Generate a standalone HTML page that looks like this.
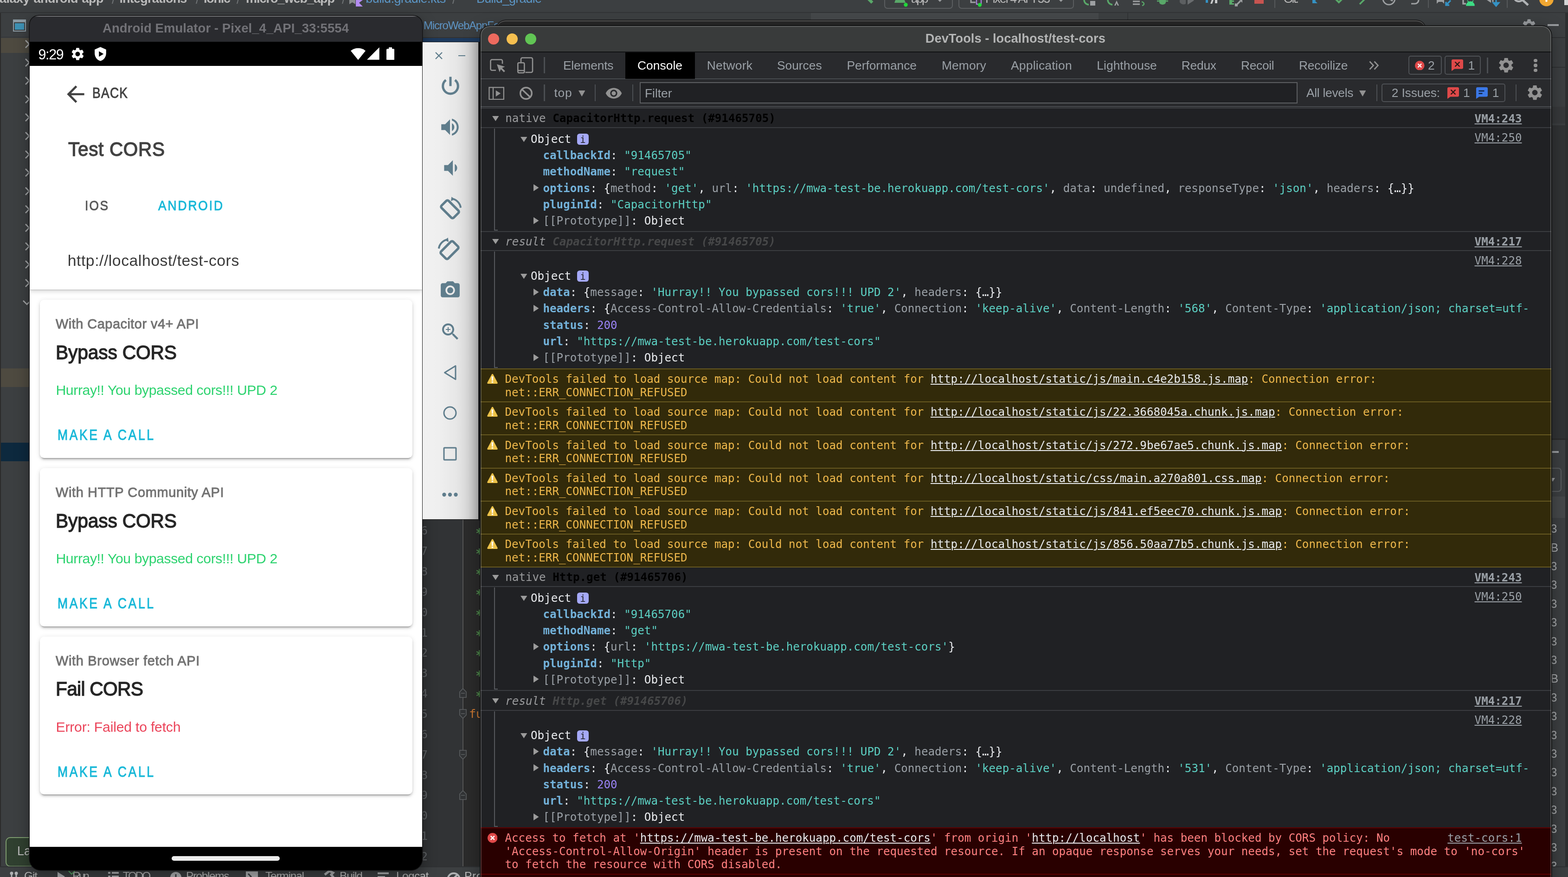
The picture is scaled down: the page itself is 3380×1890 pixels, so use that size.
<!DOCTYPE html>
<html lang="en"><head><meta charset="utf-8"><title>DevTools - localhost/test-cors</title>
<style>
html,body{margin:0;padding:0}
body{width:3380px;height:1890px;overflow:hidden;background:#3c3f41;position:relative;font-family:"Liberation Sans", sans-serif}
div,span,svg{position:absolute;display:block}
span{white-space:pre}
.L{left:0;top:0;width:0;height:0;will-change:transform}
.s{font-family:"Liberation Sans", sans-serif}
.m{font-family:"DejaVu Sans Mono", "Liberation Mono", monospace}
.u{text-decoration:underline;text-decoration-thickness:2px;text-underline-offset:1.700px}
.k{color:#73b2da;font-weight:700}
.st{color:#5cd0c3}
.g{color:#9aa0a6}
.n{color:#9a83f5}
.w{color:#e8eaed}
i,b{position:static;display:inline;font-style:inherit}
i{font-weight:inherit}
</style></head>
<body>
<div class="L">
<!-- IDE background -->
<div style="left:0.0px;top:0.0px;width:3380.0px;height:26.0px;background:#3c3f41;"></div>
<div style="left:0.0px;top:26.0px;width:3380.0px;height:2.0px;background:#323436;"></div>
<span id="t1" class="s" style="left:-17.0px;top:-20.4px;font-size:27px;line-height:35.1px;color:#bbbbbb;font-weight:700;letter-spacing:-0.502px;">galaxy-android-app</span>
<span id="t2" class="s" style="left:257.4px;top:-20.4px;font-size:27px;line-height:35.1px;color:#bbbbbb;font-weight:700;letter-spacing:-0.775px;">integrations</span>
<span id="t3" class="s" style="left:439.0px;top:-20.4px;font-size:27px;line-height:35.1px;color:#bbbbbb;font-weight:700;letter-spacing:-1.254px;">ionic</span>
<span id="t4" class="s" style="left:530.0px;top:-20.4px;font-size:27px;line-height:35.1px;color:#bbbbbb;font-weight:700;letter-spacing:-1.006px;">micro_web_app</span>
<span id="t5" class="s" style="left:241.0px;top:-17.9px;font-size:27px;line-height:35.1px;color:#6f7375;">/</span>
<span id="t6" class="s" style="left:422.0px;top:-17.9px;font-size:27px;line-height:35.1px;color:#6f7375;">/</span>
<span id="t7" class="s" style="left:510.0px;top:-17.9px;font-size:27px;line-height:35.1px;color:#6f7375;">/</span>
<span id="t8" class="s" style="left:737.0px;top:-17.9px;font-size:27px;line-height:35.1px;color:#6f7375;">/</span>
<span id="t9" class="s" style="left:975.0px;top:-17.9px;font-size:27px;line-height:35.1px;color:#6f7375;">/</span>
<span id="t10" class="s" style="left:788.3px;top:-20.4px;font-size:27px;line-height:35.1px;color:#5b95c4;letter-spacing:-0.574px;">build.gradle.kts</span>
<span id="t11" class="s" style="left:1027.0px;top:-20.4px;font-size:27px;line-height:35.1px;color:#5b95c4;letter-spacing:-0.829px;">Build_gradle</span>
<svg style="left:752.0px;top:0.0px;" width="32.0" height="14.0" viewBox="0 0 32 14"><path d="M1 0h13v9l-6.500-4-6.500 4z" fill="#8a8d8f"/><path d="M15 0h15l-8 6 8 8h-15z" fill="#b48cf2"/></svg>
<div style="left:1906.0px;top:-20.0px;width:148.0px;height:39.3px;background:transparent;border:2px solid #5a5d5f;border-radius:7px;box-sizing:border-box"></div>
<div style="left:2066.0px;top:-20.0px;width:249.0px;height:39.3px;background:transparent;border:2px solid #5a5d5f;border-radius:7px;box-sizing:border-box"></div>
<span id="t12" class="s" style="left:1964.0px;top:-19.4px;font-size:26px;line-height:33.8px;color:#bbbbbb;letter-spacing:-2.947px;">app</span>
<span id="t13" class="s" style="left:2124.0px;top:-19.4px;font-size:26px;line-height:33.8px;color:#bbbbbb;letter-spacing:-1.684px;">Pixel 4 API 33</span>
<svg style="left:1862.0px;top:0.0px;" width="24.0" height="14.0" viewBox="0 0 24 14"><path d="M2 -6l14 14 4.500-4.500-10-10z" fill="#59a869"/></svg>
<svg style="left:1926.0px;top:0.0px;" width="34.0" height="16.0" viewBox="0 0 34 16"><path d="M2 6l3-8h18l3 8z" fill="#59a869"/><circle cx="26.500" cy="10.300" r="4.200" fill="#21d739"/></svg>
<svg style="left:2018.0px;top:0.0px;" width="16.0" height="6.0" viewBox="0 0 16 6"><path d="M2 -2h12l-6 6z" fill="#9da0a2"/></svg>
<svg style="left:2279.0px;top:0.0px;" width="16.0" height="6.0" viewBox="0 0 16 6"><path d="M2 -2h12l-6 6z" fill="#9da0a2"/></svg>
<svg style="left:2090.0px;top:0.0px;" width="34.0" height="16.0" viewBox="0 0 34 16"><path d="M3 -4v9h10" fill="none" stroke="#9da0a2" stroke-width="3"/><rect x="15" y="-2" width="10" height="11" fill="none" stroke="#a77fd8" stroke-width="2.400"/><circle cx="22" cy="10.500" r="4.200" fill="#21d739"/></svg>
<svg style="left:2335.0px;top:0.0px;" width="30.0" height="14.0" viewBox="0 0 30 14"><path d="M12 -10a10 10 0 0 0 0 20" fill="none" stroke="#59a869" stroke-width="3.400"/><rect x="15" y="2" width="11" height="10" fill="#9da0a2"/></svg>
<svg style="left:2386.0px;top:0.0px;" width="30.0" height="14.0" viewBox="0 0 30 14"><path d="M12 -10a10 10 0 0 0 0 20" fill="none" stroke="#59a869" stroke-width="3.400"/><path d="M16 12l5-11 5 11h-3l-2-5-2 5z" fill="#9da0a2"/></svg>
<svg style="left:2440.0px;top:0.0px;" width="32.0" height="14.0" viewBox="0 0 32 14"><path d="M2 3h15M2 9h15" stroke="#9da0a2" stroke-width="3.200"/><path d="M21 4a5 5 0 0 1 5 5 5 5 0 0 1-4 3" fill="none" stroke="#59a869" stroke-width="2.400"/></svg>
<svg style="left:2492.0px;top:0.0px;" width="28.0" height="12.0" viewBox="0 0 28 12"><path d="M2 1h24v2.500h-24zM7 -4h14v9a7 5 0 0 1-14 0z" fill="#59a869"/></svg>
<svg style="left:2543.0px;top:0.0px;" width="34.0" height="14.0" viewBox="0 0 34 14"><path d="M3 -6a8 8 0 0 0 10 14v-14z" fill="#5c5f61"/><path d="M17 -8l14 9-14 9z" fill="#6a6d6f"/></svg>
<svg style="left:2598.0px;top:0.0px;" width="30.0" height="12.0" viewBox="0 0 30 12"><rect x="1" y="-2" width="5" height="8" fill="#3592c4"/><path d="M11 8l5-14h4l-5 14zM21 -2h5v9h-5z" fill="#c9cbcc"/></svg>
<svg style="left:2648.0px;top:0.0px;" width="34.0" height="14.0" viewBox="0 0 34 14"><path d="M2 -2h6v3h4v3h-4v3h4v3h-10z" fill="#59a869"/><path d="M16 12l10-10M20 12h-4.500v-4.500" fill="none" stroke="#9da0a2" stroke-width="3.400"/><path d="M22 -2l8 0 0 8z" fill="#9da0a2"/></svg>
<div style="left:2704.0px;top:0.0px;width:20.0px;height:7.6px;background:#c75450;"></div>
<div style="left:2746.5px;top:0.0px;width:2.0px;height:17.0px;background:#55585a;"></div>
<span id="t14" class="s" style="left:2766.7px;top:-19.4px;font-size:26px;line-height:33.8px;color:#bbbbbb;letter-spacing:-2.385px;">Git:</span>
<svg style="left:2826.0px;top:0.0px;" width="20.0" height="10.0" viewBox="0 0 20 10"><path d="M3 -4v11h11l-5-5 5-6z" fill="#3592c4"/></svg>
<svg style="left:2874.0px;top:0.0px;" width="24.0" height="10.0" viewBox="0 0 24 10"><path d="M3 -4l9 9 9-9" fill="none" stroke="#59a869" stroke-width="4"/></svg>
<svg style="left:2928.0px;top:0.0px;" width="26.0" height="12.0" viewBox="0 0 26 12"><path d="M3 9l14-14" stroke="#59a869" stroke-width="3.600"/></svg>
<svg style="left:2976.0px;top:0.0px;" width="36.0" height="14.0" viewBox="0 0 36 14"><circle cx="18" cy="-3" r="13" fill="none" stroke="#9da0a2" stroke-width="3"/><path d="M18 -3l8 5" stroke="#9da0a2" stroke-width="3"/></svg>
<svg style="left:3038.0px;top:0.0px;" width="26.0" height="12.0" viewBox="0 0 26 12"><path d="M4 8h8a8 8 0 0 0 8-8v-3" fill="none" stroke="#9da0a2" stroke-width="3.200"/></svg>
<div style="left:3078.4px;top:0.0px;width:2.0px;height:17.0px;background:#55585a;"></div>
<svg style="left:3095.0px;top:0.0px;" width="36.0" height="16.0" viewBox="0 0 36 16"><path d="M2 8v-12h16v12l-4-4h-8z" fill="#9da0a2"/><path d="M32 1l-9 9M22 4v7h7" fill="none" stroke="#3592c4" stroke-width="3.400"/></svg>
<svg style="left:3152.0px;top:0.0px;" width="30.0" height="16.0" viewBox="0 0 30 16"><path d="M2 -2v10h6" fill="none" stroke="#9da0a2" stroke-width="3.400"/><path d="M9 12a8.500 8.500 0 0 1 17 0zM11 1l3 4M24 1l-3 4" fill="#3ddc84" stroke="#3ddc84" stroke-width="1.600"/></svg>
<svg style="left:3199.0px;top:0.0px;" width="36.0" height="16.0" viewBox="0 0 36 16"><path d="M3 -2l12 8v-12z" fill="#9da0a2"/><path d="M19 -4v8" stroke="#9da0a2" stroke-width="3"/><path d="M26 -2v9M20 6l6 7 6-7z" fill="#3592c4" stroke="#3592c4" stroke-width="3"/></svg>
<div style="left:3248.4px;top:0.0px;width:2.0px;height:17.0px;background:#55585a;"></div>
<svg style="left:3262.0px;top:0.0px;" width="40.0" height="14.0" viewBox="0 0 40 14"><circle cx="12" cy="-8" r="11" fill="none" stroke="#b0b3b5" stroke-width="4"/><path d="M20 0l12 11" stroke="#b0b3b5" stroke-width="5"/></svg>
<svg style="left:3316.0px;top:0.0px;" width="36.0" height="16.0" viewBox="0 0 36 16"><circle cx="17.500" cy="-1.700" r="15.300" fill="#f0a732"/><rect x="15.500" y="-8" width="4" height="12" rx="1" fill="#fff"/></svg>
<div style="left:3372.0px;top:0.0px;width:8.0px;height:11.0px;background:#d4d5d6;"></div>
<div style="left:0.0px;top:28.0px;width:64.0px;height:1840.0px;background:#3c3f41;"></div>
<div style="left:0.0px;top:28.0px;width:2.0px;height:1840.0px;background:#2b2b2b;"></div>
<div style="left:2.0px;top:79.0px;width:64.0px;height:2.0px;background:#36393b;"></div>
<div style="left:2.0px;top:82.0px;width:64.0px;height:32.0px;background:#4e4a40;"></div>
<div style="left:2.0px;top:794.0px;width:64.0px;height:40.0px;background:#4e4a40;"></div>
<div style="left:2.0px;top:954.0px;width:64.0px;height:40.0px;background:#0d293e;"></div>
<div style="left:28.0px;top:42.0px;width:28.0px;height:26.0px;background:#8b9aa3;"></div>
<div style="left:30.0px;top:48.0px;width:24.0px;height:18.0px;background:#3c3f41;"></div>
<div style="left:32.0px;top:50.0px;width:20.0px;height:14.0px;background:#3e91b4;"></div>
<svg style="left:50.0px;top:85.0px;" width="14.0" height="20.0" viewBox="0 0 14 20"><path d="M5 2l8 8-8 8" fill="none" stroke="#a4a6a8" stroke-width="2.6"/></svg>
<svg style="left:50.0px;top:124.6px;" width="14.0" height="20.0" viewBox="0 0 14 20"><path d="M5 2l8 8-8 8" fill="none" stroke="#a4a6a8" stroke-width="2.6"/></svg>
<svg style="left:50.0px;top:164.2px;" width="14.0" height="20.0" viewBox="0 0 14 20"><path d="M5 2l8 8-8 8" fill="none" stroke="#a4a6a8" stroke-width="2.6"/></svg>
<svg style="left:50.0px;top:203.8px;" width="14.0" height="20.0" viewBox="0 0 14 20"><path d="M5 2l8 8-8 8" fill="none" stroke="#a4a6a8" stroke-width="2.6"/></svg>
<svg style="left:50.0px;top:243.4px;" width="14.0" height="20.0" viewBox="0 0 14 20"><path d="M5 2l8 8-8 8" fill="none" stroke="#a4a6a8" stroke-width="2.6"/></svg>
<svg style="left:50.0px;top:283.0px;" width="14.0" height="20.0" viewBox="0 0 14 20"><path d="M5 2l8 8-8 8" fill="none" stroke="#a4a6a8" stroke-width="2.6"/></svg>
<svg style="left:50.0px;top:322.6px;" width="14.0" height="20.0" viewBox="0 0 14 20"><path d="M5 2l8 8-8 8" fill="none" stroke="#a4a6a8" stroke-width="2.6"/></svg>
<svg style="left:50.0px;top:362.2px;" width="14.0" height="20.0" viewBox="0 0 14 20"><path d="M5 2l8 8-8 8" fill="none" stroke="#a4a6a8" stroke-width="2.6"/></svg>
<svg style="left:50.0px;top:401.8px;" width="14.0" height="20.0" viewBox="0 0 14 20"><path d="M5 2l8 8-8 8" fill="none" stroke="#a4a6a8" stroke-width="2.6"/></svg>
<svg style="left:50.0px;top:441.4px;" width="14.0" height="20.0" viewBox="0 0 14 20"><path d="M5 2l8 8-8 8" fill="none" stroke="#a4a6a8" stroke-width="2.6"/></svg>
<svg style="left:50.0px;top:481.0px;" width="14.0" height="20.0" viewBox="0 0 14 20"><path d="M5 2l8 8-8 8" fill="none" stroke="#a4a6a8" stroke-width="2.6"/></svg>
<svg style="left:50.0px;top:520.6px;" width="14.0" height="20.0" viewBox="0 0 14 20"><path d="M5 2l8 8-8 8" fill="none" stroke="#a4a6a8" stroke-width="2.6"/></svg>
<svg style="left:50.0px;top:560.2px;" width="14.0" height="20.0" viewBox="0 0 14 20"><path d="M5 2l8 8-8 8" fill="none" stroke="#a4a6a8" stroke-width="2.6"/></svg>
<svg style="left:50.0px;top:599.8px;" width="14.0" height="20.0" viewBox="0 0 14 20"><path d="M5 2l8 8-8 8" fill="none" stroke="#a4a6a8" stroke-width="2.6"/></svg>
<svg style="left:48.0px;top:645.0px;" width="16.0" height="14.0" viewBox="0 0 16 14"><path d="M2 3l8 8 8-8" fill="none" stroke="#a4a6a8" stroke-width="2.6"/></svg>
<div style="left:11.6px;top:1804.0px;width:80.0px;height:63.5px;background:#304030;border:2px solid #7c9a6e;border-radius:10px;box-sizing:border-box"></div>
<span id="t15" class="s" style="left:37.0px;top:1817.1px;font-size:27px;line-height:35.1px;color:#bbbbbb;">La</span>
<div style="left:905.0px;top:28.0px;width:140.0px;height:54.0px;background:#3c3f41;"></div>
<span id="t16" class="s" style="left:913.0px;top:39.1px;font-size:24px;line-height:31.2px;color:#5e95c5;letter-spacing:-1.191px;">MicroWebAppFe</span>
<div style="left:905.0px;top:80.0px;width:140.0px;height:2.0px;background:#323232;"></div>
<div style="left:905.0px;top:82.0px;width:140.0px;height:8.0px;background:#1d3a5e;"></div>
<div style="left:905.0px;top:90.0px;width:140.0px;height:1780.0px;background:#2b2b2b;"></div>
<div style="left:905.0px;top:90.0px;width:93.0px;height:1780.0px;background:#313335;"></div>
<div style="left:997.0px;top:90.0px;width:2.0px;height:1780.0px;background:#555555;"></div>
<span id="t17" class="m" style="left:907.0px;top:1128.3px;font-size:25px;line-height:32.5px;color:#606366;">6</span>
<span id="t18" class="m" style="left:1025.0px;top:1132.3px;font-size:28px;line-height:36.4px;color:#4f8a4c;font-weight:700;">*</span>
<span id="t19" class="m" style="left:907.0px;top:1172.1px;font-size:25px;line-height:32.5px;color:#606366;">7</span>
<span id="t20" class="m" style="left:1025.0px;top:1176.2px;font-size:28px;line-height:36.4px;color:#4f8a4c;font-weight:700;">*</span>
<span id="t21" class="m" style="left:907.0px;top:1216.0px;font-size:25px;line-height:32.5px;color:#606366;">8</span>
<span id="t22" class="m" style="left:1025.0px;top:1220.0px;font-size:28px;line-height:36.4px;color:#4f8a4c;font-weight:700;">*</span>
<span id="t23" class="m" style="left:907.0px;top:1259.8px;font-size:25px;line-height:32.5px;color:#606366;">9</span>
<span id="t24" class="m" style="left:1025.0px;top:1263.9px;font-size:28px;line-height:36.4px;color:#4f8a4c;font-weight:700;">*</span>
<span id="t25" class="m" style="left:907.0px;top:1303.7px;font-size:25px;line-height:32.5px;color:#606366;">0</span>
<span id="t26" class="m" style="left:1025.0px;top:1307.7px;font-size:28px;line-height:36.4px;color:#4f8a4c;font-weight:700;">*</span>
<span id="t27" class="m" style="left:907.0px;top:1347.5px;font-size:25px;line-height:32.5px;color:#606366;">1</span>
<span id="t28" class="m" style="left:1025.0px;top:1351.6px;font-size:28px;line-height:36.4px;color:#4f8a4c;font-weight:700;">*</span>
<span id="t29" class="m" style="left:907.0px;top:1391.4px;font-size:25px;line-height:32.5px;color:#606366;">2</span>
<span id="t30" class="m" style="left:1025.0px;top:1395.4px;font-size:28px;line-height:36.4px;color:#4f8a4c;font-weight:700;">*</span>
<span id="t31" class="m" style="left:907.0px;top:1435.2px;font-size:25px;line-height:32.5px;color:#606366;">3</span>
<span id="t32" class="m" style="left:1025.0px;top:1439.3px;font-size:28px;line-height:36.4px;color:#4f8a4c;font-weight:700;">*</span>
<span id="t33" class="m" style="left:907.0px;top:1479.1px;font-size:25px;line-height:32.5px;color:#606366;">4</span>
<span id="t34" class="m" style="left:1025.0px;top:1483.1px;font-size:28px;line-height:36.4px;color:#4f8a4c;font-weight:700;">*</span>
<span id="t35" class="m" style="left:907.0px;top:1523.0px;font-size:25px;line-height:32.5px;color:#606366;">5</span>
<span id="t36" class="m" style="left:907.0px;top:1566.8px;font-size:25px;line-height:32.5px;color:#606366;">6</span>
<span id="t37" class="m" style="left:907.0px;top:1610.6px;font-size:25px;line-height:32.5px;color:#606366;">7</span>
<span id="t38" class="m" style="left:907.0px;top:1654.5px;font-size:25px;line-height:32.5px;color:#606366;">8</span>
<span id="t39" class="m" style="left:907.0px;top:1698.4px;font-size:25px;line-height:32.5px;color:#606366;">9</span>
<span id="t40" class="m" style="left:907.0px;top:1742.2px;font-size:25px;line-height:32.5px;color:#606366;">0</span>
<span id="t41" class="m" style="left:907.0px;top:1786.0px;font-size:25px;line-height:32.5px;color:#606366;">1</span>
<span id="t42" class="m" style="left:907.0px;top:1829.9px;font-size:25px;line-height:32.5px;color:#606366;">2</span>
<span id="t43" class="m" style="left:1011.0px;top:1523.3px;font-size:25px;line-height:32.5px;color:#cc7832;">fu</span>
<svg style="left:989.0px;top:1483.0px;" width="18.0" height="22.0" viewBox="0 0 18 22"><path d="M2 8l7-7 7 7v12h-14z" fill="#313335" stroke="#5c5f61" stroke-width="1.6"/><path d="M5 11h8" stroke="#5c5f61" stroke-width="1.6"/></svg>
<svg style="left:989.0px;top:1527.0px;" width="18.0" height="22.0" viewBox="0 0 18 22"><path d="M2 2h14v12l-7 7-7-7z" fill="#313335" stroke="#5c5f61" stroke-width="1.6"/><path d="M5 11h8" stroke="#5c5f61" stroke-width="1.6"/></svg>
<svg style="left:989.0px;top:1615.0px;" width="18.0" height="22.0" viewBox="0 0 18 22"><path d="M2 2h14v12l-7 7-7-7z" fill="#313335" stroke="#5c5f61" stroke-width="1.6"/><path d="M5 11h8" stroke="#5c5f61" stroke-width="1.6"/></svg>
<svg style="left:989.0px;top:1703.0px;" width="18.0" height="22.0" viewBox="0 0 18 22"><path d="M2 8l7-7 7 7v12h-14z" fill="#313335" stroke="#5c5f61" stroke-width="1.6"/><path d="M5 11h8" stroke="#5c5f61" stroke-width="1.6"/></svg>
<div style="left:3344.0px;top:28.0px;width:36.0px;height:1840.0px;background:#3c3f41;"></div>
<div style="left:3344.0px;top:80.0px;width:30.0px;height:2.0px;background:#2f3133;"></div>
<div style="left:1748.0px;top:28.0px;width:620.0px;height:15.0px;background:#45484a;"></div>
<div style="left:2430.0px;top:28.0px;width:2.0px;height:16.0px;background:#323436;"></div>
<div style="left:3344.0px;top:144.0px;width:30.0px;height:2.0px;background:#2f3133;"></div>
<div style="left:3344.0px;top:230.0px;width:30.0px;height:36.0px;background:#37393b;"></div>
<div style="left:3373.5px;top:28.0px;width:6.5px;height:1840.0px;background:#2d2f30;"></div>
<div style="left:3344.0px;top:270.0px;width:30.0px;height:675.0px;background:#313335;"></div>
<div style="left:3344.0px;top:945.0px;width:36.0px;height:3.0px;background:#2b2b2b;"></div>
<div style="left:3344.0px;top:972.0px;width:16.0px;height:4.0px;background:#9a9da0;"></div>
<div style="left:3344.0px;top:1008.0px;width:22.0px;height:52.0px;background:#3c3f41;border:2px solid #5a5d5f;border-left:none;border-radius:0 7px 7px 0;box-sizing:border-box"></div>
<svg style="left:3344.0px;top:1030.0px;" width="8.0" height="10.0" viewBox="0 0 8 10"><path d="M-2 0h10l-5 8z" fill="#9a9da0"/></svg>
<div style="left:3344.0px;top:1070.0px;width:30.0px;height:46.0px;background:#45484a;"></div>
<span id="t44" class="s" style="left:3342.5px;top:1123.1px;font-size:25px;line-height:32.5px;color:#a9abad;">3</span>
<span id="t45" class="s" style="left:3342.5px;top:1163.5px;font-size:25px;line-height:32.5px;color:#a9abad;">B</span>
<span id="t46" class="s" style="left:3342.5px;top:1203.9px;font-size:25px;line-height:32.5px;color:#a9abad;">3</span>
<span id="t47" class="s" style="left:3342.5px;top:1244.3px;font-size:25px;line-height:32.5px;color:#a9abad;">3</span>
<span id="t48" class="s" style="left:3342.5px;top:1284.7px;font-size:25px;line-height:32.5px;color:#a9abad;">3</span>
<span id="t49" class="s" style="left:3342.5px;top:1325.1px;font-size:25px;line-height:32.5px;color:#a9abad;">3</span>
<span id="t50" class="s" style="left:3342.5px;top:1365.5px;font-size:25px;line-height:32.5px;color:#a9abad;">3</span>
<span id="t51" class="s" style="left:3342.5px;top:1405.9px;font-size:25px;line-height:32.5px;color:#a9abad;">3</span>
<span id="t52" class="s" style="left:3342.5px;top:1446.3px;font-size:25px;line-height:32.5px;color:#a9abad;">B</span>
<span id="t53" class="s" style="left:3342.5px;top:1486.7px;font-size:25px;line-height:32.5px;color:#a9abad;">3</span>
<span id="t54" class="s" style="left:3342.5px;top:1527.1px;font-size:25px;line-height:32.5px;color:#a9abad;">3</span>
<span id="t55" class="s" style="left:3342.5px;top:1567.5px;font-size:25px;line-height:32.5px;color:#a9abad;">3</span>
<span id="t56" class="s" style="left:3342.5px;top:1607.9px;font-size:25px;line-height:32.5px;color:#a9abad;">3</span>
<span id="t57" class="s" style="left:3342.5px;top:1648.3px;font-size:25px;line-height:32.5px;color:#a9abad;">3</span>
<span id="t58" class="s" style="left:3342.5px;top:1688.7px;font-size:25px;line-height:32.5px;color:#a9abad;">3</span>
<span id="t59" class="s" style="left:3342.5px;top:1729.1px;font-size:25px;line-height:32.5px;color:#a9abad;">3</span>
<span id="t60" class="s" style="left:3342.5px;top:1769.5px;font-size:25px;line-height:32.5px;color:#a9abad;">3</span>
<span id="t61" class="s" style="left:3342.5px;top:1809.9px;font-size:25px;line-height:32.5px;color:#a9abad;">3</span>
<span id="t62" class="s" style="left:3342.5px;top:1850.3px;font-size:25px;line-height:32.5px;color:#a9abad;">3</span>
<svg style="left:3279.0px;top:38.0px;" width="34.0" height="34.0" viewBox="0 0 24 24"><path fill="#9a9da0" d="M19.140 12.940c.040-.300.060-.610.060-.940 0-.320-.020-.640-.070-.940l2.030-1.580c.180-.140.230-.410.120-.610l-1.920-3.320c-.120-.220-.370-.290-.590-.220l-2.390.960c-.500-.380-1.030-.700-1.620-.940l-.360-2.540c-.040-.240-.240-.410-.480-.410h-3.840c-.240 0-.430.170-.470.410l-.360 2.540c-.590.240-1.130.570-1.620.940l-2.390-.960c-.220-.080-.470 0-.590.220L2.740 8.870c-.120.210-.080.470.120.610l2.030 1.580c-.050.300-.090.630-.090.940s.020.640.070.940l-2.030 1.580c-.180.140-.230.410-.120.610l1.920 3.320c.120.220.370.290.590.220l2.390-.960c.500.380 1.030.700 1.620.940l.360 2.540c.050.240.240.410.480.410h3.840c.240 0 .440-.170.470-.410l.360-2.540c.590-.240 1.130-.560 1.620-.940l2.390.960c.220.080.470 0 .590-.220l1.920-3.320c.120-.220.070-.470-.120-.610l-2.010-1.580zM12 15.600c-1.980 0-3.600-1.620-3.600-3.600s1.620-3.600 3.600-3.600 3.600 1.620 3.600 3.600-1.620 3.600-3.600 3.600z"/></svg>
<div style="left:3336.0px;top:52.0px;width:24.0px;height:4.0px;background:#9a9da0;"></div>
<div style="left:0.0px;top:1868.0px;width:3380.0px;height:24.0px;background:#3c3f41;"></div>
<div style="left:0.0px;top:1866.5px;width:3380.0px;height:2.0px;background:#2f3133;"></div>
<span id="t63" class="s" style="left:52.0px;top:1871.6px;font-size:24.5px;line-height:31.85px;color:#bbbbbb;letter-spacing:-1.155px;">Git</span>
<span id="t64" class="s" style="left:156.0px;top:1871.6px;font-size:24.5px;line-height:31.85px;color:#bbbbbb;letter-spacing:-3.976px;">Run</span>
<span id="t65" class="s" style="left:264.7px;top:1871.6px;font-size:24.5px;line-height:31.85px;color:#bbbbbb;letter-spacing:-3.213px;">TODO</span>
<span id="t66" class="s" style="left:401.0px;top:1871.6px;font-size:24.5px;line-height:31.85px;color:#bbbbbb;letter-spacing:-1.441px;">Problems</span>
<span id="t67" class="s" style="left:572.0px;top:1871.6px;font-size:24.5px;line-height:31.85px;color:#bbbbbb;letter-spacing:-1.228px;">Terminal</span>
<span id="t68" class="s" style="left:732.0px;top:1871.6px;font-size:24.5px;line-height:31.85px;color:#bbbbbb;letter-spacing:-1.121px;">Build</span>
<span id="t69" class="s" style="left:854.0px;top:1871.6px;font-size:24.5px;line-height:31.85px;color:#bbbbbb;letter-spacing:-0.634px;">Logcat</span>
<span id="t70" class="s" style="left:1001.0px;top:1871.6px;font-size:24.5px;line-height:31.85px;color:#bbbbbb;letter-spacing:0.628px;">Profiler</span>
<svg style="left:20.0px;top:1877.0px;" width="22.0" height="16.0" viewBox="0 0 22 16"><circle cx="5" cy="5" r="3.5" fill="#afb1b3"/><circle cx="15" cy="5" r="3.5" fill="#afb1b3"/><path d="M5 6v10M15 6v10" stroke="#afb1b3" stroke-width="3"/></svg>
<svg style="left:121.0px;top:1875.0px;" width="42.0" height="18.0" viewBox="0 0 42 18"><path d="M3 4l16 10-16 10z" fill="#afb1b3"/><path d="M27 2l6.500 7 6.500-7" fill="none" stroke="#59a869" stroke-width="2.200"/></svg>
<svg style="left:233.0px;top:1878.0px;" width="24.0" height="16.0" viewBox="0 0 24 16"><path d="M0 3h5M8 3h15M0 11h5M8 11h15" stroke="#afb1b3" stroke-width="4"/></svg>
<svg style="left:366.0px;top:1877.0px;" width="26.0" height="16.0" viewBox="0 0 26 16"><circle cx="13" cy="14" r="12" fill="#afb1b3"/><rect x="11.5" y="7" width="3" height="9" fill="#3c3f41"/></svg>
<svg style="left:530.0px;top:1877.0px;" width="28.0" height="16.0" viewBox="0 0 28 16"><rect x="0" y="1" width="26" height="22" fill="#afb1b3"/><path d="M5 6l6 6-6 6" fill="none" stroke="#3c3f41" stroke-width="3"/></svg>
<svg style="left:696.0px;top:1875.0px;" width="28.0" height="18.0" viewBox="0 0 28 18"><path d="M4 10l10-8 8 4-4 4 8 10" fill="none" stroke="#afb1b3" stroke-width="5"/></svg>
<svg style="left:814.0px;top:1879.0px;" width="28.0" height="14.0" viewBox="0 0 28 14"><path d="M0 3h24M0 11h16" stroke="#afb1b3" stroke-width="4"/></svg>
<svg style="left:962.0px;top:1877.0px;" width="32.0" height="16.0" viewBox="0 0 32 16"><path d="M3 18a13 13 0 0 1 26 0" fill="none" stroke="#afb1b3" stroke-width="4"/><path d="M16 16l8-8" stroke="#afb1b3" stroke-width="4"/></svg>
</div>
<div class="L">
<!-- emulator window -->
<div style="left:63.9px;top:33.5px;width:846.1px;height:1841.5px;border-radius:19px 19px 24px 24px;background:#000;overflow:hidden;box-shadow:0 0 0 1.5px #131314,0 12px 30px 2px rgba(0,0,0,.35)">
<div style="left:0.0px;top:0.0px;width:846.1px;height:56.5px;background:#2a2b2f;"></div>
<div style="left:0.0px;top:0.0px;width:846.1px;height:2.0px;background:linear-gradient(90deg,rgba(255,255,255,0) 0,rgba(255,255,255,.32) 2.500%,rgba(255,255,255,.32) 97.500%,rgba(255,255,255,0) 100%);"></div>
<div style="left:0.0px;top:108.0px;width:846.1px;height:1683.0px;background:#ffffff;"></div>
<span id="t71" class="s" style="left:157.1px;top:9.4px;font-size:27.5px;line-height:35.75px;color:#727277;font-weight:700;letter-spacing:0.059px;">Android Emulator - Pixel_4_API_33:5554</span>
<span id="t72" class="s" style="left:18.6px;top:64.1px;font-size:30.5px;line-height:39.65px;color:#ffffff;letter-spacing:-1.355px;">9:29</span>
<svg style="left:87.6px;top:66.7px;" width="32.9" height="32.9" viewBox="0 0 24 24"><path fill="#fff" d="M19.140 12.940c.040-.300.060-.610.060-.940 0-.320-.020-.640-.070-.940l2.030-1.580c.180-.140.230-.410.120-.610l-1.920-3.320c-.120-.220-.370-.290-.590-.220l-2.390.960c-.500-.380-1.030-.700-1.620-.940l-.360-2.540c-.040-.240-.240-.410-.480-.410h-3.840c-.240 0-.430.170-.470.410l-.360 2.540c-.590.240-1.130.570-1.620.940l-2.390-.960c-.220-.080-.470 0-.590.220L2.740 8.870c-.120.210-.080.470.120.610l2.030 1.580c-.050.300-.090.630-.090.940s.020.640.070.940l-2.030 1.580c-.180.140-.230.410-.120.610l1.920 3.320c.120.220.370.290.590.220l2.390-.960c.500.380 1.030.700 1.620.940l.360 2.540c.050.240.240.410.480.410h3.840c.240 0 .440-.170.470-.410l.360-2.540c.590-.240 1.130-.560 1.620-.940l2.390.960c.220.080.470 0 .590-.220l1.920-3.320c.120-.220.070-.470-.120-.610l-2.010-1.580zM12 15.600c-1.980 0-3.600-1.620-3.600-3.600s1.620-3.600 3.600-3.600 3.600 1.620 3.600 3.600-1.620 3.600-3.600 3.600z"/></svg>
<svg style="left:136.0px;top:66.1px;" width="32.9" height="32.9" viewBox="0 0 24 24"><path fill="#fff" fill-rule="evenodd" d="M12 1L3 5v6c0 5.550 3.840 10.740 9 12 5.160-1.260 9-6.450 9-12V5l-9-4zM9.700 7.600l7.300 4.300-7.300 4.300z"/></svg>
<svg style="left:691.9px;top:68.2px;" width="32.0" height="27.2" viewBox="0 0 32 27.200"><path fill="#fff" d="M16 27.200L0 7.600A24.500 24.500 0 0 1 32 7.600z"/></svg>
<svg style="left:727.1px;top:68.7px;" width="26.7" height="26.7" viewBox="0 0 26.700 26.700"><path fill="#fff" d="M0 26.700L26.700 0v26.700z"/></svg>
<svg style="left:769.0px;top:68.2px;" width="17.2" height="27.4" viewBox="0 0 17.200 27.400"><path fill="#fff" d="M5.100 0h7v3.300h3.100a2 2 0 0 1 2 2v20.100a2 2 0 0 1-2 2h-13.200a2 2 0 0 1-2-2v-20.100a2 2 0 0 1 2-2h3.100z"/></svg>
<div style="left:0.0px;top:108.0px;width:846.1px;height:482.0px;background:#fff;box-shadow:0 4px 9px rgba(0,0,0,.16),0 1px 2px rgba(0,0,0,.18)"></div>
<svg style="left:71.2px;top:141.5px;" width="56.0" height="56.0" viewBox="0 0 24 24"><path fill="#424242" d="M20 11H7.830l5.590-5.590L12 4l-8 8 8 8 1.410-1.410L7.830 13H20v-2z"/></svg>
<span id="t73" class="s" style="left:135.3px;top:147.5px;font-size:30.5px;line-height:39.65px;color:#424242;transform:scaleX(0.87);transform-origin:0 0;letter-spacing:1.431px;-webkit-text-stroke:.032em;">BACK</span>
<span id="t74" class="s" style="left:82.8px;top:260.0px;font-size:42.7px;line-height:55.51px;color:#424242;transform:scaleX(0.95);transform-origin:0 0;letter-spacing:0.684px;-webkit-text-stroke:.032em;">Test CORS</span>
<span id="t75" class="s" style="left:119.4px;top:389.4px;font-size:30.3px;line-height:39.39px;color:#5a5a5a;transform:scaleX(0.87);transform-origin:0 0;letter-spacing:2.638px;-webkit-text-stroke:.032em;">IOS</span>
<span id="t76" class="s" style="left:277.4px;top:389.4px;font-size:30.3px;line-height:39.39px;color:#19b8d8;transform:scaleX(0.87);transform-origin:0 0;letter-spacing:3.343px;-webkit-text-stroke:.032em;">ANDROID</span>
<span id="t77" class="s" style="left:81.9px;top:506.4px;font-size:33.8px;line-height:43.94px;color:#3a3a3a;letter-spacing:0.504px;">http://localhost/test-cors</span>
<div style="left:22.1px;top:612.5px;width:803.5px;height:340.5px;background:#fff;border-radius:9px;box-shadow:0 6px 2px -4px rgba(0,0,0,.2),0 4px 4px 0 rgba(0,0,0,.14),0 2px 11px 0 rgba(0,0,0,.12)"></div>
<span id="t78" class="s" style="left:56.6px;top:644.8px;font-size:30.2px;line-height:39.26px;color:#737373;transform:scaleX(0.96);transform-origin:0 0;letter-spacing:0.482px;-webkit-text-stroke:.032em;">With Capacitor v4+ API</span>
<span id="t79" class="s" style="left:56.6px;top:697.1px;font-size:43.4px;line-height:56.42px;color:#262626;transform:scaleX(0.94);transform-origin:0 0;letter-spacing:-0.206px;-webkit-text-stroke:.032em;">Bypass CORS</span>
<span id="t80" class="s" style="left:56.6px;top:787.9px;font-size:30.2px;line-height:39.26px;color:#2dd36f;letter-spacing:-0.410px;">Hurray!! You bypassed cors!!! UPD 2</span>
<span id="t81" class="s" style="left:60.1px;top:884.6px;font-size:30.5px;line-height:39.65px;color:#19b8d8;transform:scaleX(0.87);transform-origin:0 0;letter-spacing:4.127px;-webkit-text-stroke:.032em;">MAKE A CALL</span>
<div style="left:22.1px;top:975.5px;width:803.5px;height:340.5px;background:#fff;border-radius:9px;box-shadow:0 6px 2px -4px rgba(0,0,0,.2),0 4px 4px 0 rgba(0,0,0,.14),0 2px 11px 0 rgba(0,0,0,.12)"></div>
<span id="t82" class="s" style="left:56.6px;top:1007.8px;font-size:30.2px;line-height:39.26px;color:#737373;transform:scaleX(0.96);transform-origin:0 0;letter-spacing:0.643px;-webkit-text-stroke:.032em;">With HTTP Community API</span>
<span id="t83" class="s" style="left:56.6px;top:1060.1px;font-size:43.4px;line-height:56.42px;color:#262626;transform:scaleX(0.94);transform-origin:0 0;letter-spacing:-0.206px;-webkit-text-stroke:.032em;">Bypass CORS</span>
<span id="t84" class="s" style="left:56.6px;top:1150.9px;font-size:30.2px;line-height:39.26px;color:#2dd36f;letter-spacing:-0.410px;">Hurray!! You bypassed cors!!! UPD 2</span>
<span id="t85" class="s" style="left:60.1px;top:1247.6px;font-size:30.5px;line-height:39.65px;color:#19b8d8;transform:scaleX(0.87);transform-origin:0 0;letter-spacing:4.127px;-webkit-text-stroke:.032em;">MAKE A CALL</span>
<div style="left:22.1px;top:1338.3px;width:803.5px;height:340.5px;background:#fff;border-radius:9px;box-shadow:0 6px 2px -4px rgba(0,0,0,.2),0 4px 4px 0 rgba(0,0,0,.14),0 2px 11px 0 rgba(0,0,0,.12)"></div>
<span id="t86" class="s" style="left:56.6px;top:1370.6px;font-size:30.2px;line-height:39.26px;color:#737373;transform:scaleX(0.96);transform-origin:0 0;letter-spacing:0.693px;-webkit-text-stroke:.032em;">With Browser fetch API</span>
<span id="t87" class="s" style="left:56.6px;top:1422.9px;font-size:43.4px;line-height:56.42px;color:#262626;transform:scaleX(0.94);transform-origin:0 0;letter-spacing:-0.786px;-webkit-text-stroke:.032em;">Fail CORS</span>
<span id="t88" class="s" style="left:56.6px;top:1513.7px;font-size:30.2px;line-height:39.26px;color:#eb445a;letter-spacing:-0.213px;">Error: Failed to fetch</span>
<span id="t89" class="s" style="left:60.1px;top:1610.4px;font-size:30.5px;line-height:39.65px;color:#19b8d8;transform:scaleX(0.87);transform-origin:0 0;letter-spacing:4.127px;-webkit-text-stroke:.032em;">MAKE A CALL</span>
<div style="left:306.1px;top:1811.9px;width:233.0px;height:9.4px;background:#ebebeb;border-radius:5px"></div>
</div>
<!-- emulator side toolbar -->
<div style="left:910.0px;top:90.0px;width:121.5px;height:1030.0px;background:#efefef;background:linear-gradient(90deg,#f1f1f1 0%,#efefef 30%,#e7e7e7 60%,#d8d8d8 82%,#bebebe 100%);border:1px solid #1d1d1d;box-sizing:border-box"></div>
<div style="left:1031.0px;top:90.0px;width:6.0px;height:1032.0px;background:#1c1c1e;"></div>
<svg style="left:936.0px;top:110.0px;" width="20.0" height="20.0" viewBox="0 0 20 20"><path d="M3 3l14 14M17 3l-14 14" stroke="#5f7d8c" stroke-width="2.4" fill="none"/></svg>
<div style="left:988.0px;top:118.5px;width:15.0px;height:2.4px;background:#5f7d8c;"></div>
<svg style="left:946.5px;top:160.3px;" width="48.0" height="48.0" viewBox="0 0 48 48"><path d="M14.200 12.600a16.300 16.300 0 1 0 19.600 0" fill="none" stroke="#5f7d8c" stroke-width="5"/><path d="M24 5.500v20" stroke="#5f7d8c" stroke-width="5"/></svg>
<svg style="left:945.0px;top:249.0px;" width="50.0" height="50.0" viewBox="0 0 24 24"><path fill="#5f7d8c" d="M3 9v6h4l5 5V4L7 9H3zm13.5 3c0-1.770-1.020-3.290-2.500-4.030v8.050c1.480-.730 2.500-2.250 2.500-4.020zM14 3.230v2.060c2.890.860 5 3.540 5 6.710s-2.110 5.850-5 6.710v2.060c4.010-.910 7-4.490 7-8.770s-2.990-7.860-7-8.770z"/></svg>
<svg style="left:947.0px;top:337.0px;" width="50.0" height="50.0" viewBox="0 0 24 24"><path fill="#5f7d8c" d="M18.500 12c0-1.770-1.020-3.290-2.500-4.030v8.050c1.480-.730 2.500-2.250 2.500-4.020zM5 9v6h4l5 5V4L9 9H5z"/></svg>
<svg style="left:943.0px;top:423.5px;" width="54.0" height="54.0" viewBox="0 0 24 24"><g fill="none" stroke="#5f7d8c" stroke-width="2.3"><rect x="7.200" y="3.800" width="9.600" height="16.400" rx="1.600" transform="rotate(-45 12 12)"/><path d="M13.300 1.800a10.300 10.300 0 0 1 9 8.700" stroke-width="1.800"/></g><path fill="#5f7d8c" d="M13.500 0l3 2.600-3.600 1.600z"/></svg>
<svg style="left:941.5px;top:511.5px;" width="54.0" height="54.0" viewBox="0 0 24 24"><g transform="matrix(-1 0 0 1 24 0)"><g fill="none" stroke="#5f7d8c" stroke-width="2.3"><rect x="7.200" y="3.800" width="9.600" height="16.400" rx="1.600" transform="rotate(-45 12 12)"/><path d="M13.300 1.800a10.300 10.300 0 0 1 9 8.700" stroke-width="1.800"/></g><path fill="#5f7d8c" d="M13.500 0l3 2.600-3.600 1.600z"/></g></svg>
<svg style="left:945.5px;top:599.5px;" width="49.0" height="49.0" viewBox="0 0 24 24"><circle cx="12" cy="12.500" r="3.200" fill="#5f7d8c"/><path fill="#5f7d8c" fill-rule="evenodd" d="M9 3L7.170 5H4c-1.100 0-2 .900-2 2v11c0 1.100.900 2 2 2h16c1.100 0 2-.900 2-2V7c0-1.100-.900-2-2-2h-3.170L15 3H9zm3 14.500c-2.760 0-5-2.240-5-5s2.240-5 5-5 5 2.240 5 5-2.240 5-5 5z"/></svg>
<svg style="left:947.0px;top:690.5px;" width="48.0" height="48.0" viewBox="0 0 24 24"><path fill="#5f7d8c" d="M15.500 14h-.790l-.280-.270C15.410 12.590 16 11.110 16 9.500 16 5.910 13.090 3 9.500 3S3 5.910 3 9.500 5.910 16 9.500 16c1.610 0 3.090-.590 4.230-1.570l.270.280v.790l5 4.990L20.490 19l-4.990-5zm-6 0C7.010 14 5 11.990 5 9.500S7.010 5 9.500 5 14 7.010 14 9.500 11.990 14 9.500 14z"/><path fill="#5f7d8c" d="M12 10h-2v2H9v-2H7V9h2V7h1v2h2v1z"/></svg>
<svg style="left:955.0px;top:785.0px;" width="32.0" height="36.0" viewBox="0 0 32 36"><path d="M27 3.500v29L3.500 18z" fill="none" stroke="#5f7d8c" stroke-width="3" stroke-linejoin="round"/></svg>
<svg style="left:954.0px;top:874.0px;" width="32.0" height="32.0" viewBox="0 0 32 32"><circle cx="16" cy="16" r="13" fill="none" stroke="#5f7d8c" stroke-width="3"/></svg>
<svg style="left:954.0px;top:962.0px;" width="32.0" height="32.0" viewBox="0 0 32 32"><rect x="3" y="3" width="26" height="26" rx="1.500" fill="none" stroke="#5f7d8c" stroke-width="3"/></svg>
<svg style="left:950.0px;top:1058.0px;" width="40.0" height="16.0" viewBox="0 0 40 16"><circle cx="7.500" cy="8" r="4.200" fill="#5f7d8c"/><circle cx="20" cy="8" r="4.200" fill="#5f7d8c"/><circle cx="32.500" cy="8" r="4.200" fill="#5f7d8c"/></svg>
</div>
<div class="L">
<!-- inactive window behind -->
<div style="left:1070.0px;top:43.5px;width:2003.0px;height:60.0px;background:#282828;border-radius:20px 20px 0 0;box-shadow:0 0 0 1.500px #161616, inset 0 2px 0 rgba(255,255,255,.22)"></div>
<!-- devtools window -->
<div style="left:1035.8px;top:56.0px;width:2308.2px;height:1900px;border-radius:20px 20px 0 0;background:#202124;overflow:hidden;box-shadow:0 0 0 1.500px #0c0c0c,0 8px 36px 0 rgba(0,0,0,.38)">
<div style="left:0.0px;top:0.0px;width:2308.2px;height:56.4px;background:#393b3b;"></div>
<div style="left:0.0px;top:54.6px;width:2308.2px;height:2.0px;background:#111213;"></div>
<div style="left:16.0px;top:15.8px;width:24.4px;height:24.4px;background:#ed6a5e;border-radius:50%"></div>
<div style="left:56.0px;top:15.8px;width:24.4px;height:24.4px;background:#f5bf4f;border-radius:50%"></div>
<div style="left:96.0px;top:15.8px;width:24.4px;height:24.4px;background:#61c554;border-radius:50%"></div>
<span id="t90" class="s" style="left:959.0px;top:9.1px;font-size:27.2px;line-height:35.36px;color:#b4b5b5;font-weight:700;letter-spacing:0.060px;">DevTools - localhost/test-cors</span>
<div style="left:0.0px;top:56.6px;width:2308.2px;height:57.4px;background:#292a2d;"></div>
<div style="left:0.0px;top:113.0px;width:2308.2px;height:2.0px;background:#494c50;"></div>
<div style="left:312.2px;top:56.6px;width:150.0px;height:57.4px;background:#000000;"></div>
<span id="t91" class="s" style="left:178.2px;top:67.6px;font-size:26.4px;line-height:34.32px;color:#9aa0a6;letter-spacing:-0.216px;">Elements</span>
<span id="t92" class="s" style="left:338.2px;top:67.6px;font-size:26.4px;line-height:34.32px;color:#ffffff;letter-spacing:0.028px;">Console</span>
<span id="t93" class="s" style="left:488.0px;top:67.6px;font-size:26.4px;line-height:34.32px;color:#9aa0a6;letter-spacing:0.233px;">Network</span>
<span id="t94" class="s" style="left:639.2px;top:67.6px;font-size:26.4px;line-height:34.32px;color:#9aa0a6;letter-spacing:-0.036px;">Sources</span>
<span id="t95" class="s" style="left:789.7px;top:67.6px;font-size:26.4px;line-height:34.32px;color:#9aa0a6;letter-spacing:-0.058px;">Performance</span>
<span id="t96" class="s" style="left:994.2px;top:67.6px;font-size:26.4px;line-height:34.32px;color:#9aa0a6;letter-spacing:0.097px;">Memory</span>
<span id="t97" class="s" style="left:1143.2px;top:67.6px;font-size:26.4px;line-height:34.32px;color:#9aa0a6;letter-spacing:0.248px;">Application</span>
<span id="t98" class="s" style="left:1328.5px;top:67.6px;font-size:26.4px;line-height:34.32px;color:#9aa0a6;letter-spacing:0.041px;">Lighthouse</span>
<span id="t99" class="s" style="left:1511.0px;top:67.6px;font-size:26.4px;line-height:34.32px;color:#9aa0a6;letter-spacing:-0.273px;">Redux</span>
<span id="t100" class="s" style="left:1639.2px;top:67.6px;font-size:26.4px;line-height:34.32px;color:#9aa0a6;letter-spacing:-0.329px;">Recoil</span>
<span id="t101" class="s" style="left:1764.2px;top:67.6px;font-size:26.4px;line-height:34.32px;color:#9aa0a6;letter-spacing:-0.198px;">Recoilize</span>
<svg style="left:19.2px;top:68.0px;" width="36.0" height="36.0" viewBox="0 0 36 36"><path d="M14 27.500h-8.500a3 3 0 0 1-3-3v-17a3 3 0 0 1 3-3h19.500a3 3 0 0 1 3 3v6" fill="none" stroke="#929292" stroke-width="2.600"/><path d="M16 14.500l5.800 17 2.900-6.300 6.500 6.500 2.600-2.600-6.500-6.500 6.300-2.900z" fill="#929292"/></svg>
<svg style="left:78.2px;top:65.0px;" width="36.0" height="38.0" viewBox="0 0 36 38"><path d="M9 13v-6.500a3 3 0 0 1 3-3h19a3 3 0 0 1 3 3v25.500a3 3 0 0 1-3 3h-12.500" fill="none" stroke="#929292" stroke-width="2.600"/><rect x="2.300" y="14.300" width="14" height="21.700" rx="2.500" fill="none" stroke="#929292" stroke-width="2.600"/><path d="M3 31h13" stroke="#929292" stroke-width="2.400"/></svg>
<div style="left:136.7px;top:67.0px;width:2.2px;height:34.5px;background:#4b4e52;"></div>
<svg style="left:1914.2px;top:74.0px;" width="24.0" height="22.0" viewBox="0 0 24 22"><path d="M2.500 2.500l8 8.500-8 8.500M12.500 2.500l8 8.500-8 8.500" fill="none" stroke="#929292" stroke-width="2.700"/></svg>
<div style="left:2000.6px;top:64.3px;width:71.5px;height:40.6px;background:transparent;border:2px solid #4d5054;border-radius:5px;box-sizing:border-box"></div>
<svg style="left:2014.6px;top:74.6px;" width="20.6" height="20.6" viewBox="0 0 20 20"><circle cx="10" cy="10" r="10" fill="#df4949"/><path d="M6.300 6.300l7.400 7.400M13.700 6.300l-7.400 7.400" stroke="#fff" stroke-width="2.300"/></svg>
<span id="t102" class="s" style="left:2042.2px;top:67.6px;font-size:26.4px;line-height:34.32px;color:#9aa0a6;">2</span>
<div style="left:2077.8px;top:64.3px;width:78.2px;height:40.6px;background:transparent;border:2px solid #4d5054;border-radius:5px;box-sizing:border-box"></div>
<svg style="left:2093.5px;top:72.0px;" width="25.0" height="25.0" viewBox="0 0 25 25"><path d="M3 0h19a3 3 0 0 1 3 3v14.500a3 3 0 0 1-3 3h-15.500l-6.500 4.500v-22a3 3 0 0 1 3-3z" fill="#df4949"/><path d="M7.500 5.500l10 10M17.500 5.500l-10 10" stroke="#2b1614" stroke-width="2.400"/></svg>
<span id="t103" class="s" style="left:2128.7px;top:67.6px;font-size:26.4px;line-height:34.32px;color:#9aa0a6;">1</span>
<div style="left:2169.7px;top:67.5px;width:2.2px;height:34.5px;background:#4b4e52;"></div>
<svg style="left:2191.4px;top:65.2px;" width="39.2" height="39.2" viewBox="0 0 24 24"><path fill="#929292" d="M19.140 12.940c.040-.300.060-.610.060-.940 0-.320-.020-.640-.070-.940l2.030-1.580c.180-.140.230-.410.120-.610l-1.920-3.320c-.120-.220-.370-.290-.590-.220l-2.390.960c-.500-.380-1.030-.700-1.620-.940l-.360-2.540c-.040-.240-.240-.410-.480-.410h-3.840c-.240 0-.430.170-.470.410l-.360 2.540c-.590.240-1.130.570-1.620.940l-2.390-.960c-.220-.080-.470 0-.590.220L2.740 8.870c-.120.210-.080.470.120.610l2.030 1.580c-.050.300-.090.630-.090.940s.020.640.070.940l-2.030 1.580c-.180.140-.230.410-.120.610l1.920 3.320c.120.220.370.290.590.220l2.390-.960c.500.380 1.030.700 1.620.940l.360 2.540c.050.240.240.410.480.410h3.840c.240 0 .440-.170.470-.410l.360-2.540c.590-.240 1.130-.560 1.620-.940l2.390.960c.220.080.470 0 .590-.220l1.920-3.320c.120-.220.070-.470-.120-.610l-2.010-1.580zM12 15.600c-1.980 0-3.600-1.620-3.600-3.600s1.620-3.600 3.600-3.600 3.600 1.620 3.600 3.600-1.620 3.600-3.600 3.600z"/></svg>
<div style="left:2270.4px;top:70.7px;width:7.6px;height:7.6px;background:#929292;border-radius:50%"></div>
<div style="left:2270.4px;top:81.2px;width:7.6px;height:7.6px;background:#929292;border-radius:50%"></div>
<div style="left:2270.4px;top:91.7px;width:7.6px;height:7.6px;background:#929292;border-radius:50%"></div>
<div style="left:0.0px;top:116.0px;width:2308.2px;height:58.0px;background:#292a2d;"></div>
<div style="left:0.0px;top:173.0px;width:2308.2px;height:2.0px;background:#494c50;"></div>
<svg style="left:16.8px;top:130.7px;" width="34.3" height="28.6" viewBox="0 0 36 30"><rect x="1.500" y="1.500" width="33" height="27" fill="none" stroke="#929292" stroke-width="2.400"/><path d="M10.500 1.500v27" stroke="#929292" stroke-width="2.400"/><path d="M16.500 8l11 7-11 7z" fill="#929292"/></svg>
<svg style="left:83.2px;top:130.0px;" width="30.0" height="30.0" viewBox="0 0 30 30"><circle cx="15" cy="15" r="12.300" fill="none" stroke="#929292" stroke-width="3.400"/><path d="M6.500 7l17 16" stroke="#929292" stroke-width="3.400"/></svg>
<div style="left:136.7px;top:126.0px;width:2.2px;height:35.5px;background:#4b4e52;"></div>
<span id="t104" class="s" style="left:158.8px;top:127.2px;font-size:26.4px;line-height:34.32px;color:#9aa0a6;letter-spacing:0.655px;">top</span>
<svg style="left:211.2px;top:138.5px;" width="14.5" height="13.0" viewBox="0 0 14.500 13"><path d="M0 0h14.500l-7.250 13z" fill="#929292"/></svg>
<div style="left:246.2px;top:126.0px;width:2.2px;height:35.5px;background:#4b4e52;"></div>
<svg style="left:269.7px;top:129.0px;" width="36.0" height="32.0" viewBox="0 0 36 32"><path d="M18 4.500c-8 0-14.600 5-17.300 11.500 2.700 6.500 9.300 11.500 17.300 11.500s14.600-5 17.300-11.500c-2.700-6.500-9.300-11.500-17.300-11.500zm0 19.200a7.700 7.700 0 1 1 0-15.400 7.700 7.700 0 0 1 0 15.400zm0-12.300a4.600 4.600 0 1 0 0 9.200 4.600 4.600 0 0 0 0-9.200z" fill="#929292"/></svg>
<div style="left:327.2px;top:126.0px;width:2.2px;height:35.5px;background:#4b4e52;"></div>
<div style="left:343.6px;top:121.0px;width:1418.0px;height:45.8px;background:#202124;border:2px solid #5c5e61;box-sizing:border-box"></div>
<span id="t105" class="s" style="left:354.2px;top:127.7px;font-size:26.4px;line-height:34.32px;color:#9aa0a6;letter-spacing:-0.031px;">Filter</span>
<span id="t106" class="s" style="left:1780.2px;top:127.2px;font-size:26.4px;line-height:34.32px;color:#9aa0a6;letter-spacing:-0.293px;">All levels</span>
<svg style="left:1894.2px;top:138.5px;" width="14.5" height="13.0" viewBox="0 0 14.500 13"><path d="M0 0h14.500l-7.250 13z" fill="#929292"/></svg>
<div style="left:1931.2px;top:126.0px;width:2.2px;height:35.5px;background:#4b4e52;"></div>
<div style="left:1942.5px;top:124.2px;width:266.5px;height:40.0px;background:transparent;border:2px solid #4d5054;border-radius:5px;box-sizing:border-box"></div>
<span id="t107" class="s" style="left:1964.0px;top:127.2px;font-size:26.4px;line-height:34.32px;color:#9aa0a6;letter-spacing:-0.177px;">2 Issues:</span>
<svg style="left:2084.2px;top:131.5px;" width="25.0" height="25.0" viewBox="0 0 25 25"><path d="M3 0h19a3 3 0 0 1 3 3v14.500a3 3 0 0 1-3 3h-15.500l-6.500 4.500v-22a3 3 0 0 1 3-3z" fill="#df4949"/><path d="M7.500 5.500l10 10M17.500 5.500l-10 10" stroke="#2b1614" stroke-width="2.400"/></svg>
<span id="t108" class="s" style="left:2118.2px;top:127.2px;font-size:26.4px;line-height:34.32px;color:#9aa0a6;">1</span>
<svg style="left:2146.2px;top:131.5px;" width="25.0" height="25.0" viewBox="0 0 25 25"><path d="M3 0h19a3 3 0 0 1 3 3v14.500a3 3 0 0 1-3 3h-15.500l-6.500 4.500v-22a3 3 0 0 1 3-3z" fill="#3b78e7"/><path d="M5.500 8h12M5.500 13.500h8" stroke="#10203c" stroke-width="2.400"/></svg>
<span id="t109" class="s" style="left:2181.0px;top:127.2px;font-size:26.4px;line-height:34.32px;color:#9aa0a6;">1</span>
<div style="left:2231.2px;top:126.0px;width:2.2px;height:35.5px;background:#4b4e52;"></div>
<svg style="left:2253.6px;top:124.3px;" width="39.2" height="39.2" viewBox="0 0 24 24"><path fill="#929292" d="M19.140 12.940c.040-.300.060-.610.060-.940 0-.320-.020-.640-.070-.940l2.030-1.580c.180-.140.230-.410.120-.610l-1.920-3.320c-.120-.220-.370-.290-.590-.220l-2.390.960c-.500-.380-1.030-.700-1.620-.940l-.360-2.540c-.040-.240-.240-.410-.480-.410h-3.840c-.240 0-.430.170-.470.410l-.360 2.540c-.590.240-1.130.570-1.620.940l-2.390-.960c-.220-.080-.470 0-.590.220L2.740 8.870c-.120.210-.080.470.120.610l2.030 1.580c-.050.300-.090.630-.090.940s.020.640.070.940l-2.030 1.580c-.180.140-.230.410-.120.610l1.920 3.320c.120.220.370.290.590.220l2.390-.960c.500.380 1.030.700 1.620.940l.360 2.540c.050.240.240.410.480.410h3.840c.240 0 .440-.170.470-.410l.360-2.540c.590-.240 1.130-.560 1.620-.940l2.390.960c.220.080.470 0 .590-.220l1.920-3.320c.120-.220.070-.470-.120-.610l-2.010-1.580zM12 15.600c-1.980 0-3.600-1.620-3.600-3.600s1.620-3.600 3.600-3.600 3.600 1.620 3.600 3.600-1.620 3.600-3.600 3.600z"/></svg>
<div style="left:0.0px;top:176.0px;width:2308.2px;height:2.0px;background:#3a3c40;"></div>
<svg style="left:24.8px;top:193.5px;" width="14.5" height="11.0" viewBox="0 0 14.5 11"><path d="M0 0h14.5l-7.25 11z" fill="#9b9b9b"/></svg>
<span id="t110" class="m" style="left:53.5px;top:184.1px;font-size:24.2px;line-height:31.46px;color:#9a9b9d;">native</span>
<span id="t111" class="m" style="left:155.5px;top:184.1px;font-size:24.2px;line-height:31.46px;color:#000000;font-weight:700;">CapacitorHttp.request (#91465705)</span>
<span id="t112" class="m u" style="left:2142.8px;top:184.5px;font-size:24.2px;line-height:31.46px;color:#9aa0a6;font-weight:700;">VM4:243</span>
<div style="left:0.0px;top:217.8px;width:2308.2px;height:2.0px;background:#3a3c40;"></div>
<div style="left:29.4px;top:220.8px;width:2.0px;height:220.2px;background:#55585c;"></div>
<div style="left:29.4px;top:439.0px;width:7.5px;height:2.0px;background:#55585c;"></div>
<svg style="left:86.2px;top:238.8px;" width="14.5" height="11.0" viewBox="0 0 14.5 11"><path d="M0 0h14.5l-7.25 11z" fill="#9b9b9b"/></svg>
<span id="t113" class="m" style="left:108.2px;top:228.9px;font-size:24.2px;line-height:31.46px;color:#e8eaed;">Object</span>
<div style="left:208.2px;top:232.3px;width:25.0px;height:24.0px;background:#a5a9f8;border-radius:5.500px"></div>
<span id="t114" class="m" style="left:214.5px;top:232.2px;font-size:20.5px;line-height:26.65px;color:#202124;">i</span>
<span id="t115" class="m u" style="left:2142.8px;top:225.9px;font-size:24.2px;line-height:31.46px;color:#9aa0a6;">VM4:250</span>
<span id="t116" class="m" style="left:134.6px;top:264.1px;font-size:24.2px;line-height:31.46px;color:#e8eaed;"><b class="k">callbackId</b>: <i class="st">"91465705"</i></span>
<span id="t117" class="m" style="left:134.6px;top:299.3px;font-size:24.2px;line-height:31.46px;color:#e8eaed;"><b class="k">methodName</b>: <i class="st">"request"</i></span>
<svg style="left:114.6px;top:341.1px;" width="11.5" height="15.0" viewBox="0 0 11.5 15"><path d="M0 0l11.5 7.5l-11.5 7.5z" fill="#9b9b9b"/></svg>
<span id="t118" class="m" style="left:134.6px;top:334.5px;font-size:24.2px;line-height:31.46px;color:#e8eaed;"><b class="k">options</b>: {<i class="g">method</i>: <i class="st">'get'</i>, <i class="g">url</i>: <i class="st">'https://mwa-test-be.herokuapp.com/test-cors'</i>, <i class="g">data</i>: <i class="g">undefined</i>, <i class="g">responseType</i>: <i class="st">'json'</i>, <i class="g">headers</i>: {…}}</span>
<span id="t119" class="m" style="left:134.6px;top:369.7px;font-size:24.2px;line-height:31.46px;color:#e8eaed;"><b class="k">pluginId</b>: <i class="st">"CapacitorHttp"</i></span>
<svg style="left:114.6px;top:411.5px;" width="11.5" height="15.0" viewBox="0 0 11.5 15"><path d="M0 0l11.5 7.5l-11.5 7.5z" fill="#9b9b9b"/></svg>
<span id="t120" class="m" style="left:134.6px;top:404.9px;font-size:24.2px;line-height:31.46px;color:#e8eaed;"><i class="g">[[Prototype]]</i>: Object</span>
<div style="left:0.0px;top:441.6px;width:2308.2px;height:2.0px;background:#3a3c40;"></div>
<svg style="left:24.8px;top:459.0px;" width="14.5" height="11.0" viewBox="0 0 14.5 11"><path d="M0 0h14.5l-7.25 11z" fill="#9b9b9b"/></svg>
<span id="t121" class="m" style="left:53.5px;top:449.6px;font-size:24.2px;line-height:31.46px;color:#9a9b9d;font-style:italic;">result</span>
<span id="t122" class="m" style="left:155.5px;top:449.6px;font-size:24.2px;line-height:31.46px;color:#464748;font-weight:700;font-style:italic;">CapacitorHttp.request (#91465705)</span>
<span id="t123" class="m u" style="left:2142.8px;top:450.0px;font-size:24.2px;line-height:31.46px;color:#9aa0a6;font-weight:700;">VM4:217</span>
<div style="left:0.0px;top:483.3px;width:2308.2px;height:2.0px;background:#3a3c40;"></div>
<div style="left:29.4px;top:486.3px;width:2.0px;height:250.2px;background:#55585c;"></div>
<div style="left:29.4px;top:734.5px;width:7.5px;height:2.0px;background:#55585c;"></div>
<svg style="left:86.2px;top:533.9px;" width="14.5" height="11.0" viewBox="0 0 14.5 11"><path d="M0 0h14.5l-7.25 11z" fill="#9b9b9b"/></svg>
<span id="t124" class="m" style="left:108.2px;top:524.0px;font-size:24.2px;line-height:31.46px;color:#e8eaed;">Object</span>
<div style="left:208.2px;top:527.4px;width:25.0px;height:24.0px;background:#a5a9f8;border-radius:5.500px"></div>
<span id="t125" class="m" style="left:214.5px;top:527.3px;font-size:20.5px;line-height:26.65px;color:#202124;">i</span>
<span id="t126" class="m u" style="left:2142.8px;top:491.1px;font-size:24.2px;line-height:31.46px;color:#9aa0a6;">VM4:228</span>
<svg style="left:114.6px;top:565.8px;" width="11.5" height="15.0" viewBox="0 0 11.5 15"><path d="M0 0l11.5 7.5l-11.5 7.5z" fill="#9b9b9b"/></svg>
<span id="t127" class="m" style="left:134.6px;top:559.2px;font-size:24.2px;line-height:31.46px;color:#e8eaed;"><b class="k">data</b>: {<i class="g">message</i>: <i class="st">'Hurray!! You bypassed cors!!! UPD 2'</i>, <i class="g">headers</i>: {…}}</span>
<svg style="left:114.6px;top:601.0px;" width="11.5" height="15.0" viewBox="0 0 11.5 15"><path d="M0 0l11.5 7.5l-11.5 7.5z" fill="#9b9b9b"/></svg>
<span id="t128" class="m" style="left:134.6px;top:594.4px;font-size:24.2px;line-height:31.46px;color:#e8eaed;"><b class="k">headers</b>: {<i class="g">Access-Control-Allow-Credentials</i>: <i class="st">'true'</i>, <i class="g">Connection</i>: <i class="st">'keep-alive'</i>, <i class="g">Content-Length</i>: <i class="st">'568'</i>, <i class="g">Content-Type</i>: <i class="st">'application/json; charset=utf-</i></span>
<span id="t129" class="m" style="left:134.6px;top:629.6px;font-size:24.2px;line-height:31.46px;color:#e8eaed;"><b class="k">status</b>: <i class="n">200</i></span>
<span id="t130" class="m" style="left:134.6px;top:664.8px;font-size:24.2px;line-height:31.46px;color:#e8eaed;"><b class="k">url</b>: <i class="st">"https://mwa-test-be.herokuapp.com/test-cors"</i></span>
<svg style="left:114.6px;top:706.6px;" width="11.5" height="15.0" viewBox="0 0 11.5 15"><path d="M0 0l11.5 7.5l-11.5 7.5z" fill="#9b9b9b"/></svg>
<span id="t131" class="m" style="left:134.6px;top:700.0px;font-size:24.2px;line-height:31.46px;color:#e8eaed;"><i class="g">[[Prototype]]</i>: Object</span>
<div style="left:0.0px;top:738.6px;width:2308.2px;height:427.8px;background:#322a0a;"></div>
<div style="left:0.0px;top:737.6px;width:2308.2px;height:2.0px;background:#665820;"></div>
<svg style="left:14.7px;top:748.6px;" width="23.0" height="22.5" viewBox="0 0 23 22.500"><path d="M11.500 .800a1.600 1.600 0 0 1 1.400 .800l9.600 18a1.600 1.600 0 0 1-1.400 2.400h-19.200a1.600 1.600 0 0 1-1.400-2.400l9.600-18a1.600 1.600 0 0 1 1.400-.800z" fill="#ecc148"/><path d="M9.600 6.300h3.800l-.500 9.300h-2.800zM9.800 17h3.400v2.700h-3.400z" fill="#fff"/></svg>
<span id="t132" class="m" style="left:52.7px;top:745.9px;font-size:24.2px;line-height:31.46px;color:#edb74b;">DevTools failed to load source map: Could not load content for <i class="u w">http://localhost/static/js/main.c4e2b158.js.map</i>: Connection error:</span>
<span id="t133" class="m" style="left:52.7px;top:774.5px;font-size:24.2px;line-height:31.46px;color:#edb74b;">net::ERR_CONNECTION_REFUSED</span>
<div style="left:0.0px;top:808.9px;width:2308.2px;height:2.0px;background:#665820;"></div>
<svg style="left:14.7px;top:819.9px;" width="23.0" height="22.5" viewBox="0 0 23 22.500"><path d="M11.500 .800a1.600 1.600 0 0 1 1.400 .800l9.600 18a1.600 1.600 0 0 1-1.400 2.400h-19.200a1.600 1.600 0 0 1-1.400-2.400l9.600-18a1.600 1.600 0 0 1 1.400-.800z" fill="#ecc148"/><path d="M9.600 6.300h3.800l-.500 9.300h-2.800zM9.800 17h3.400v2.700h-3.400z" fill="#fff"/></svg>
<span id="t134" class="m" style="left:52.7px;top:817.2px;font-size:24.2px;line-height:31.46px;color:#edb74b;">DevTools failed to load source map: Could not load content for <i class="u w">http://localhost/static/js/22.3668045a.chunk.js.map</i>: Connection error:</span>
<span id="t135" class="m" style="left:52.7px;top:845.8px;font-size:24.2px;line-height:31.46px;color:#edb74b;">net::ERR_CONNECTION_REFUSED</span>
<div style="left:0.0px;top:880.2px;width:2308.2px;height:2.0px;background:#665820;"></div>
<svg style="left:14.7px;top:891.2px;" width="23.0" height="22.5" viewBox="0 0 23 22.500"><path d="M11.500 .800a1.600 1.600 0 0 1 1.400 .800l9.600 18a1.600 1.600 0 0 1-1.400 2.400h-19.200a1.600 1.600 0 0 1-1.400-2.400l9.600-18a1.600 1.600 0 0 1 1.400-.800z" fill="#ecc148"/><path d="M9.600 6.300h3.800l-.500 9.300h-2.800zM9.800 17h3.400v2.700h-3.400z" fill="#fff"/></svg>
<span id="t136" class="m" style="left:52.7px;top:888.5px;font-size:24.2px;line-height:31.46px;color:#edb74b;">DevTools failed to load source map: Could not load content for <i class="u w">http://localhost/static/js/272.9be67ae5.chunk.js.map</i>: Connection error:</span>
<span id="t137" class="m" style="left:52.7px;top:917.1px;font-size:24.2px;line-height:31.46px;color:#edb74b;">net::ERR_CONNECTION_REFUSED</span>
<div style="left:0.0px;top:951.5px;width:2308.2px;height:2.0px;background:#665820;"></div>
<svg style="left:14.7px;top:962.5px;" width="23.0" height="22.5" viewBox="0 0 23 22.500"><path d="M11.500 .800a1.600 1.600 0 0 1 1.400 .800l9.600 18a1.600 1.600 0 0 1-1.400 2.400h-19.200a1.600 1.600 0 0 1-1.400-2.400l9.600-18a1.600 1.600 0 0 1 1.400-.800z" fill="#ecc148"/><path d="M9.600 6.300h3.800l-.500 9.300h-2.800zM9.800 17h3.400v2.700h-3.400z" fill="#fff"/></svg>
<span id="t138" class="m" style="left:52.7px;top:959.8px;font-size:24.2px;line-height:31.46px;color:#edb74b;">DevTools failed to load source map: Could not load content for <i class="u w">http://localhost/static/css/main.a270a801.css.map</i>: Connection error:</span>
<span id="t139" class="m" style="left:52.7px;top:988.4px;font-size:24.2px;line-height:31.46px;color:#edb74b;">net::ERR_CONNECTION_REFUSED</span>
<div style="left:0.0px;top:1022.8px;width:2308.2px;height:2.0px;background:#665820;"></div>
<svg style="left:14.7px;top:1033.8px;" width="23.0" height="22.5" viewBox="0 0 23 22.500"><path d="M11.500 .800a1.600 1.600 0 0 1 1.400 .800l9.600 18a1.600 1.600 0 0 1-1.400 2.400h-19.200a1.600 1.600 0 0 1-1.400-2.400l9.600-18a1.600 1.600 0 0 1 1.400-.800z" fill="#ecc148"/><path d="M9.600 6.300h3.800l-.500 9.300h-2.800zM9.800 17h3.400v2.700h-3.400z" fill="#fff"/></svg>
<span id="t140" class="m" style="left:52.7px;top:1031.1px;font-size:24.2px;line-height:31.46px;color:#edb74b;">DevTools failed to load source map: Could not load content for <i class="u w">http://localhost/static/js/841.ef5eec70.chunk.js.map</i>: Connection error:</span>
<span id="t141" class="m" style="left:52.7px;top:1059.7px;font-size:24.2px;line-height:31.46px;color:#edb74b;">net::ERR_CONNECTION_REFUSED</span>
<div style="left:0.0px;top:1094.1px;width:2308.2px;height:2.0px;background:#665820;"></div>
<svg style="left:14.7px;top:1105.1px;" width="23.0" height="22.5" viewBox="0 0 23 22.500"><path d="M11.500 .800a1.600 1.600 0 0 1 1.400 .800l9.600 18a1.600 1.600 0 0 1-1.400 2.400h-19.200a1.600 1.600 0 0 1-1.400-2.400l9.600-18a1.600 1.600 0 0 1 1.400-.800z" fill="#ecc148"/><path d="M9.600 6.300h3.800l-.500 9.300h-2.800zM9.800 17h3.400v2.700h-3.400z" fill="#fff"/></svg>
<span id="t142" class="m" style="left:52.7px;top:1102.4px;font-size:24.2px;line-height:31.46px;color:#edb74b;">DevTools failed to load source map: Could not load content for <i class="u w">http://localhost/static/js/856.50aa77b5.chunk.js.map</i>: Connection error:</span>
<span id="t143" class="m" style="left:52.7px;top:1131.0px;font-size:24.2px;line-height:31.46px;color:#edb74b;">net::ERR_CONNECTION_REFUSED</span>
<div style="left:0.0px;top:1165.4px;width:2308.2px;height:2.0px;background:#665820;"></div>
<svg style="left:24.8px;top:1182.5px;" width="14.5" height="11.0" viewBox="0 0 14.5 11"><path d="M0 0h14.5l-7.25 11z" fill="#9b9b9b"/></svg>
<span id="t144" class="m" style="left:53.5px;top:1173.1px;font-size:24.2px;line-height:31.46px;color:#9a9b9d;">native</span>
<span id="t145" class="m" style="left:155.5px;top:1173.1px;font-size:24.2px;line-height:31.46px;color:#000000;font-weight:700;">Http.get (#91465706)</span>
<span id="t146" class="m u" style="left:2142.8px;top:1173.5px;font-size:24.2px;line-height:31.46px;color:#9aa0a6;font-weight:700;">VM4:243</span>
<div style="left:0.0px;top:1206.8px;width:2308.2px;height:2.0px;background:#3a3c40;"></div>
<div style="left:29.4px;top:1209.8px;width:2.0px;height:220.5px;background:#55585c;"></div>
<div style="left:29.4px;top:1428.3px;width:7.5px;height:2.0px;background:#55585c;"></div>
<svg style="left:86.2px;top:1227.6px;" width="14.5" height="11.0" viewBox="0 0 14.5 11"><path d="M0 0h14.5l-7.25 11z" fill="#9b9b9b"/></svg>
<span id="t147" class="m" style="left:108.2px;top:1217.7px;font-size:24.2px;line-height:31.46px;color:#e8eaed;">Object</span>
<div style="left:208.2px;top:1221.1px;width:25.0px;height:24.0px;background:#a5a9f8;border-radius:5.500px"></div>
<span id="t148" class="m" style="left:214.5px;top:1221.0px;font-size:20.5px;line-height:26.65px;color:#202124;">i</span>
<span id="t149" class="m u" style="left:2142.8px;top:1214.7px;font-size:24.2px;line-height:31.46px;color:#9aa0a6;">VM4:250</span>
<span id="t150" class="m" style="left:134.6px;top:1252.9px;font-size:24.2px;line-height:31.46px;color:#e8eaed;"><b class="k">callbackId</b>: <i class="st">"91465706"</i></span>
<span id="t151" class="m" style="left:134.6px;top:1288.1px;font-size:24.2px;line-height:31.46px;color:#e8eaed;"><b class="k">methodName</b>: <i class="st">"get"</i></span>
<svg style="left:114.6px;top:1329.9px;" width="11.5" height="15.0" viewBox="0 0 11.5 15"><path d="M0 0l11.5 7.5l-11.5 7.5z" fill="#9b9b9b"/></svg>
<span id="t152" class="m" style="left:134.6px;top:1323.3px;font-size:24.2px;line-height:31.46px;color:#e8eaed;"><b class="k">options</b>: {<i class="g">url</i>: <i class="st">'https://mwa-test-be.herokuapp.com/test-cors'</i>}</span>
<span id="t153" class="m" style="left:134.6px;top:1358.5px;font-size:24.2px;line-height:31.46px;color:#e8eaed;"><b class="k">pluginId</b>: <i class="st">"Http"</i></span>
<svg style="left:114.6px;top:1400.3px;" width="11.5" height="15.0" viewBox="0 0 11.5 15"><path d="M0 0l11.5 7.5l-11.5 7.5z" fill="#9b9b9b"/></svg>
<span id="t154" class="m" style="left:134.6px;top:1393.7px;font-size:24.2px;line-height:31.46px;color:#e8eaed;"><i class="g">[[Prototype]]</i>: Object</span>
<div style="left:0.0px;top:1430.5px;width:2308.2px;height:2.0px;background:#3a3c40;"></div>
<svg style="left:24.8px;top:1449.3px;" width="14.5" height="11.0" viewBox="0 0 14.5 11"><path d="M0 0h14.5l-7.25 11z" fill="#9b9b9b"/></svg>
<span id="t155" class="m" style="left:53.5px;top:1439.9px;font-size:24.2px;line-height:31.46px;color:#9a9b9d;font-style:italic;">result</span>
<span id="t156" class="m" style="left:155.5px;top:1439.9px;font-size:24.2px;line-height:31.46px;color:#464748;font-weight:700;font-style:italic;">Http.get (#91465706)</span>
<span id="t157" class="m u" style="left:2142.8px;top:1440.3px;font-size:24.2px;line-height:31.46px;color:#9aa0a6;font-weight:700;">VM4:217</span>
<div style="left:0.0px;top:1473.6px;width:2308.2px;height:2.0px;background:#3a3c40;"></div>
<div style="left:29.4px;top:1476.6px;width:2.0px;height:248.9px;background:#55585c;"></div>
<div style="left:29.4px;top:1723.5px;width:7.5px;height:2.0px;background:#55585c;"></div>
<svg style="left:86.2px;top:1524.0px;" width="14.5" height="11.0" viewBox="0 0 14.5 11"><path d="M0 0h14.5l-7.25 11z" fill="#9b9b9b"/></svg>
<span id="t158" class="m" style="left:108.2px;top:1514.1px;font-size:24.2px;line-height:31.46px;color:#e8eaed;">Object</span>
<div style="left:208.2px;top:1517.5px;width:25.0px;height:24.0px;background:#a5a9f8;border-radius:5.500px"></div>
<span id="t159" class="m" style="left:214.5px;top:1517.4px;font-size:20.5px;line-height:26.65px;color:#202124;">i</span>
<span id="t160" class="m u" style="left:2142.8px;top:1481.4px;font-size:24.2px;line-height:31.46px;color:#9aa0a6;">VM4:228</span>
<svg style="left:114.6px;top:1555.9px;" width="11.5" height="15.0" viewBox="0 0 11.5 15"><path d="M0 0l11.5 7.5l-11.5 7.5z" fill="#9b9b9b"/></svg>
<span id="t161" class="m" style="left:134.6px;top:1549.3px;font-size:24.2px;line-height:31.46px;color:#e8eaed;"><b class="k">data</b>: {<i class="g">message</i>: <i class="st">'Hurray!! You bypassed cors!!! UPD 2'</i>, <i class="g">headers</i>: {…}}</span>
<svg style="left:114.6px;top:1591.1px;" width="11.5" height="15.0" viewBox="0 0 11.5 15"><path d="M0 0l11.5 7.5l-11.5 7.5z" fill="#9b9b9b"/></svg>
<span id="t162" class="m" style="left:134.6px;top:1584.5px;font-size:24.2px;line-height:31.46px;color:#e8eaed;"><b class="k">headers</b>: {<i class="g">Access-Control-Allow-Credentials</i>: <i class="st">'true'</i>, <i class="g">Connection</i>: <i class="st">'keep-alive'</i>, <i class="g">Content-Length</i>: <i class="st">'531'</i>, <i class="g">Content-Type</i>: <i class="st">'application/json; charset=utf-</i></span>
<span id="t163" class="m" style="left:134.6px;top:1619.7px;font-size:24.2px;line-height:31.46px;color:#e8eaed;"><b class="k">status</b>: <i class="n">200</i></span>
<span id="t164" class="m" style="left:134.6px;top:1654.9px;font-size:24.2px;line-height:31.46px;color:#e8eaed;"><b class="k">url</b>: <i class="st">"https://mwa-test-be.herokuapp.com/test-cors"</i></span>
<svg style="left:114.6px;top:1696.7px;" width="11.5" height="15.0" viewBox="0 0 11.5 15"><path d="M0 0l11.5 7.5l-11.5 7.5z" fill="#9b9b9b"/></svg>
<span id="t165" class="m" style="left:134.6px;top:1690.1px;font-size:24.2px;line-height:31.46px;color:#e8eaed;"><i class="g">[[Prototype]]</i>: Object</span>
<div style="left:0.0px;top:1728.0px;width:2308.2px;height:120.0px;background:#290000;"></div>
<div style="left:0.0px;top:1727.0px;width:2308.2px;height:2.0px;background:#5c0000;"></div>
<div style="left:0.0px;top:1827.0px;width:2308.2px;height:2.0px;background:#5c0000;"></div>
<svg style="left:15.2px;top:1739.0px;" width="21.5" height="21.5" viewBox="0 0 20 20"><circle cx="10" cy="10" r="10" fill="#df4949"/><path d="M6.200 6.200l7.600 7.600M13.800 6.200l-7.600 7.600" stroke="#fff" stroke-width="2.400"/></svg>
<span id="t166" class="m" style="left:52.7px;top:1735.1px;font-size:24.2px;line-height:31.46px;color:#ff8080;">Access to fetch at '<i class="u w">https://mwa-test-be.herokuapp.com/test-cors</i>' from origin '<i class="u w">http://localhost</i>' has been blocked by CORS policy: No</span>
<span id="t167" class="m" style="left:52.7px;top:1763.7px;font-size:24.2px;line-height:31.46px;color:#ff8080;">'Access-Control-Allow-Origin' header is present on the requested resource. If an opaque response serves your needs, set the request's mode to 'no-cors'</span>
<span id="t168" class="m" style="left:52.7px;top:1792.3px;font-size:24.2px;line-height:31.46px;color:#ff8080;">to fetch the resource with CORS disabled.</span>
<span id="t169" class="m u" style="left:2084.5px;top:1735.1px;font-size:24.2px;line-height:31.46px;color:#9aa0a6;">test-cors:1</span>
<div style="left:0.0px;top:0.0px;width:2308.2px;height:1900.0px;background:transparent;border:2px solid rgba(255,255,255,.2);border-bottom:none;border-radius:20px 20px 0 0;box-sizing:border-box"></div>
</div>
</div>
</body></html>
